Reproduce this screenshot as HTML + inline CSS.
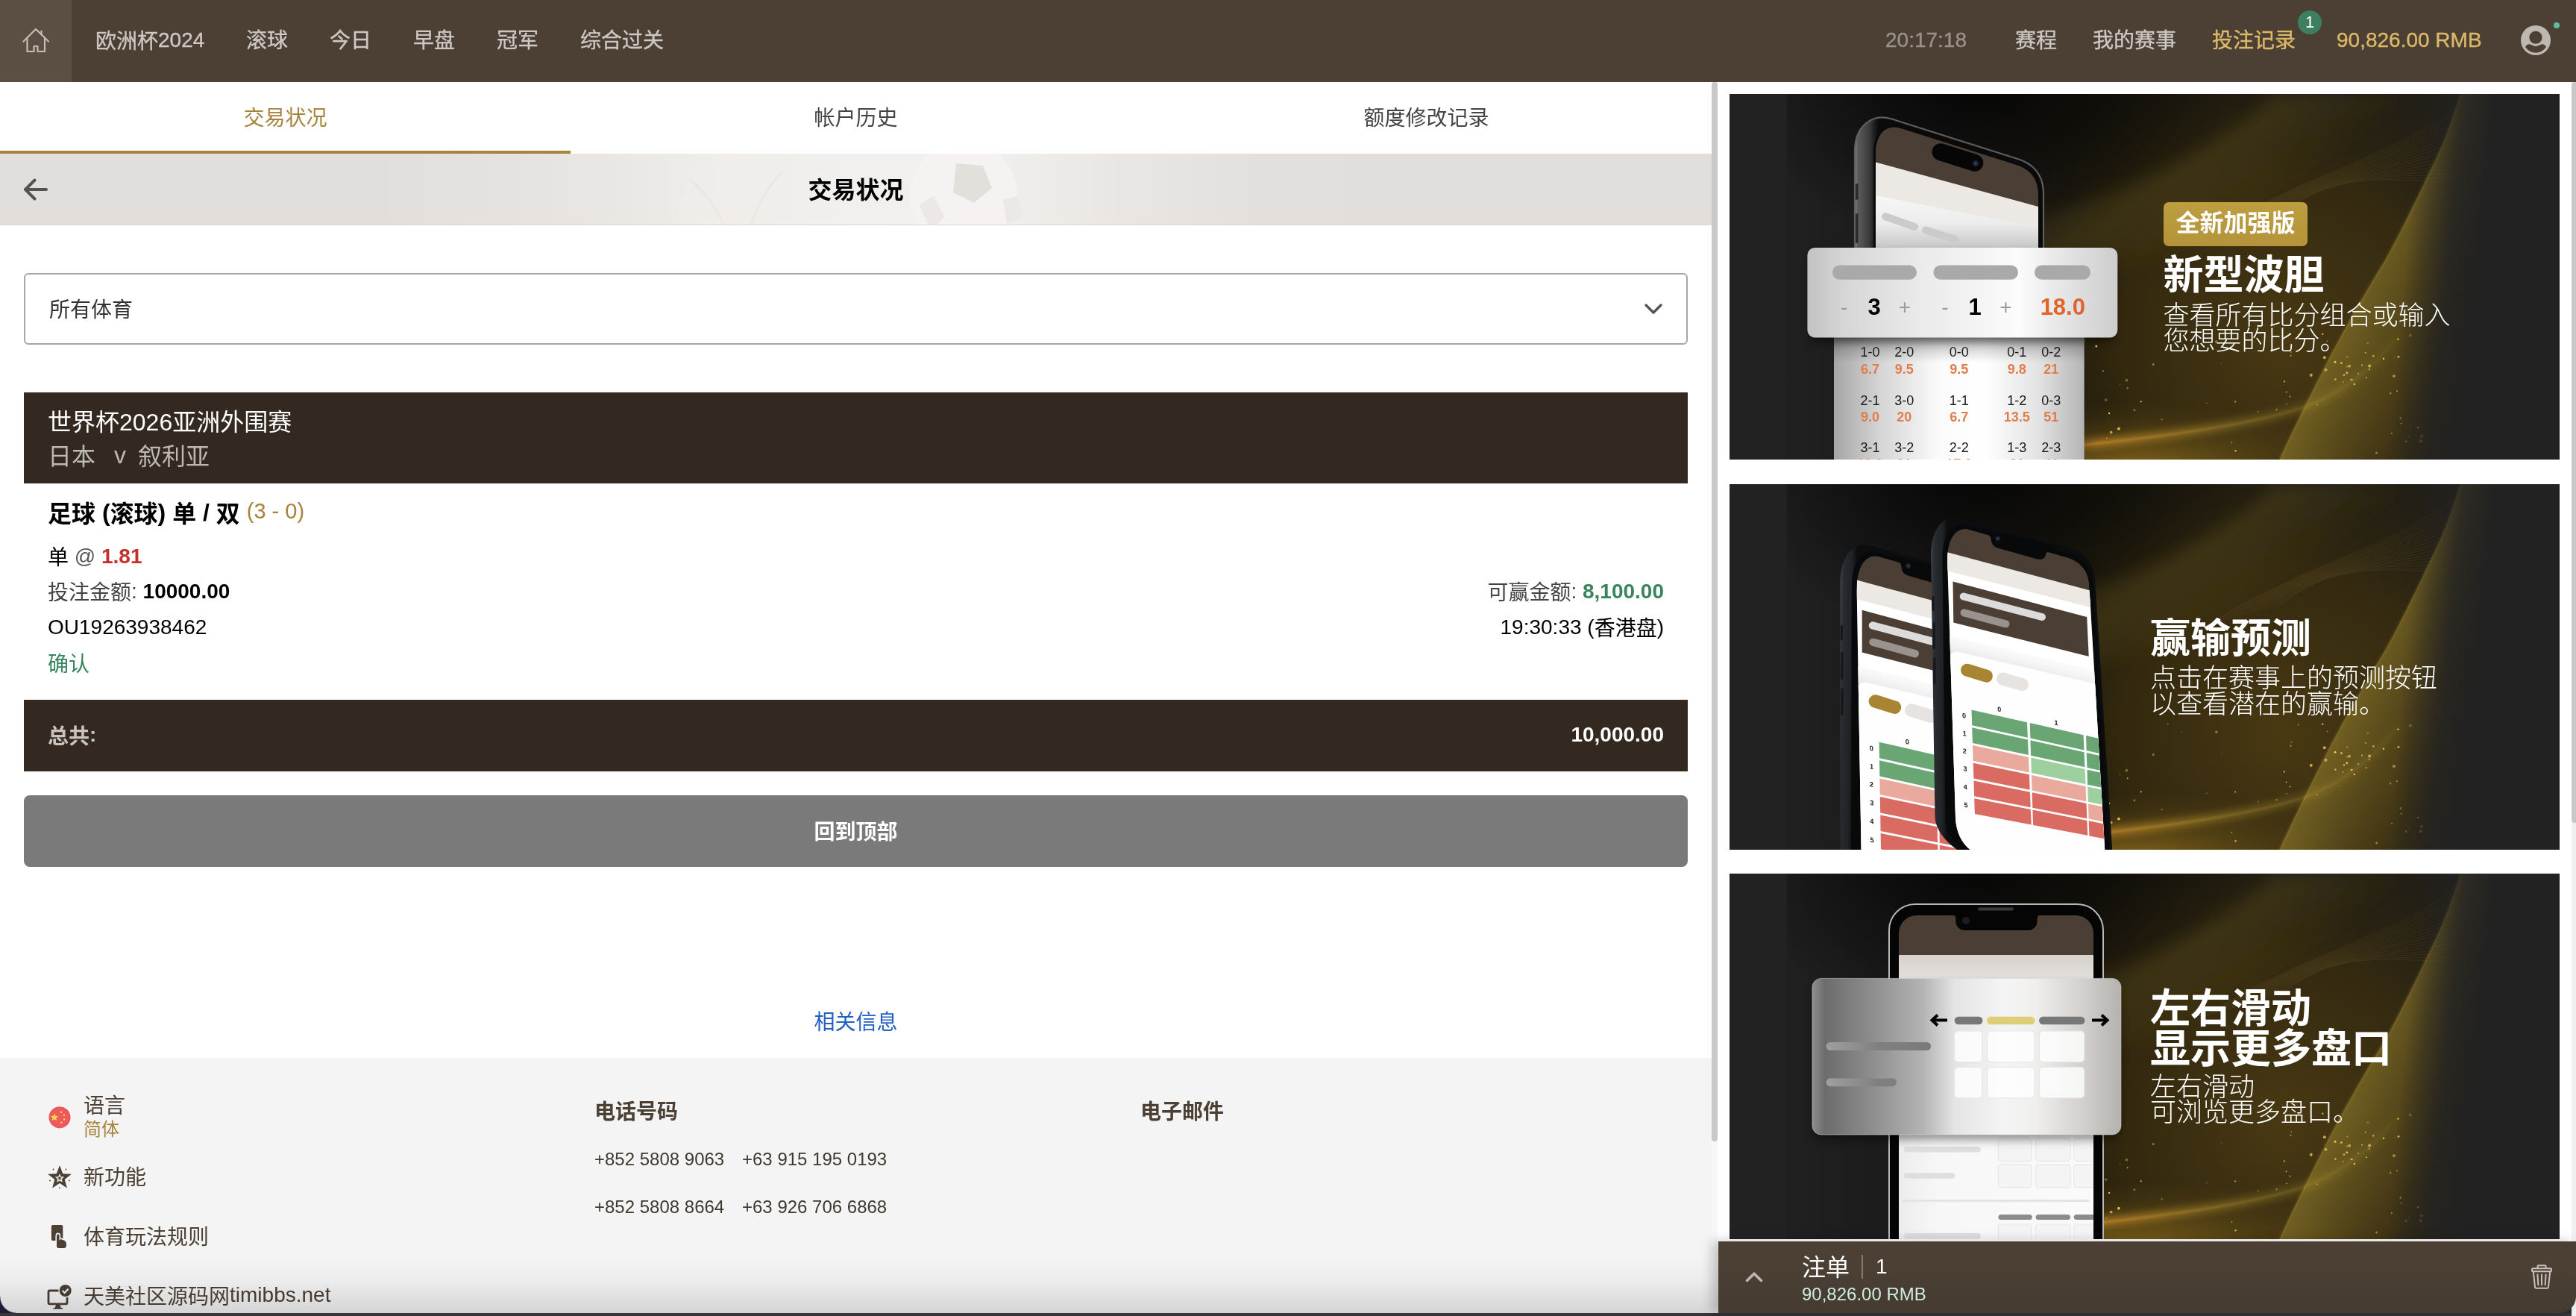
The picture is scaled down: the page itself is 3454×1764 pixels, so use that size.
<!DOCTYPE html>
<html lang="zh-CN">
<head>
<meta charset="utf-8">
<title>交易状况</title>
<style>
*{box-sizing:border-box;margin:0;padding:0}
html,body{width:3454px;height:1764px;overflow:hidden;background:#fff}
body{font-family:"Liberation Sans","Noto Sans CJK SC",sans-serif;font-size:28px;color:#000;position:relative;will-change:transform;transform:translateZ(0)}
@media (min-width:1700px) and (max-width:1800px){html{zoom:0.5}}
.abs{position:absolute}
.c{position:relative;top:2px}
/* NAV */
#nav{position:absolute;left:0;top:0;width:3454px;height:110px;background:#4c4035}
#home{position:absolute;left:0;top:0;width:96px;height:110px;background:#5b4f44}
#nav .it{position:absolute;top:0;height:110px;line-height:110px;font-size:28px;color:#cdc8c3;white-space:nowrap;-webkit-text-stroke:0.35px}
#nav .it.la{line-height:108px}
#nav .gold{color:#dcb968}
/* TABS */
#tabs{position:absolute;left:0;top:110px;width:2295px;height:96px;background:#fff}
#tabs .tab{position:absolute;top:0;width:765px;height:96px;line-height:98px;text-align:center;font-size:28px;color:#444}
#tabs .tab.on{color:#a5843c;border-bottom:4px solid #a5843c}
/* TITLE */
#title{position:absolute;left:0;top:206px;width:2295px;height:96px;overflow:hidden;background:linear-gradient(90deg,#e1dedb 0,#e1dedb 21%,#e6e3e0 32%,#efedea 42%,#f2f0ee 50%,#f1efed 58%,#e8e5e2 66%,#e2dfdc 74%,#e1dedb 100%);border-bottom:1px solid #d9d6d3}
#title .t{position:absolute;left:0;top:0;width:2295px;height:96px;line-height:98px;text-align:center;font-size:32px;font-weight:bold;color:#000}
/* main */
#sel{position:absolute;left:32px;top:366px;width:2231px;height:96px;border:2px solid #a6a6a6;border-radius:6px;background:#fff;font-size:28px;color:#333;line-height:96px;padding-left:32px}
#hdr{position:absolute;left:32px;top:526px;width:2231px;height:122px;background:#332921}
#hdr .l1{position:absolute;left:32px;top:18px;font-size:32px;line-height:44px;color:#fff;white-space:nowrap}
#hdr .l2{position:absolute;left:32px;top:64px;font-size:32px;line-height:44px;color:#bdb8b3;white-space:nowrap}
.ln{position:absolute;left:64px;height:48px;line-height:48px;font-size:28px;white-space:nowrap;color:#000}
.rn{position:absolute;right:1223px;height:48px;line-height:48px;font-size:28px;white-space:nowrap;color:#000;text-align:right}
#tot{position:absolute;left:32px;top:938px;width:2231px;height:96px;background:#332921;line-height:94px;font-weight:bold;font-size:28px}
#btn{position:absolute;left:32px;top:1066px;width:2231px;height:96px;background:#7a7a7a;border-radius:8px;line-height:100px;text-align:center;font-weight:bold;font-size:28px;color:#fff}
#rel{position:absolute;left:0;top:1347px;width:2295px;height:48px;line-height:48px;text-align:center;color:#2160c4;font-size:28px}
#foot{position:absolute;left:0;top:1418px;width:2295px;height:346px;background:#f4f4f4}
#foot .fi{position:absolute;left:112px;font-size:28px;color:#4c4035;white-space:nowrap;line-height:40px}
#foot .fh{position:absolute;font-size:28px;font-weight:bold;color:#4c4035;white-space:nowrap;line-height:40px}
#foot .ph{position:absolute;font-size:24px;color:#40372f;white-space:nowrap;line-height:40px}
/* scrollbars */
#sb1t{position:absolute;left:2295px;top:110px;width:8px;height:1654px;background:rgba(0,0,0,0.03)}
#sb1{position:absolute;left:2295px;top:110px;width:8px;height:1420px;background:#c8c8c8;border-radius:4px}
#sb2t{position:absolute;left:3448px;top:110px;width:6px;height:1654px;background:#f0f0f0}
#sb2{position:absolute;left:3448px;top:110px;width:8px;height:993px;background:#c8c8c8;border-radius:4px}
/* right */
.ban{position:absolute;left:2319px;width:1113px;height:490px;background:#222;overflow:hidden}
.bt1{position:absolute;color:#fff;font-weight:bold;font-size:54px;line-height:54.2px;white-space:nowrap;font-family:"Noto Sans CJK SC",sans-serif}
.bt2{position:absolute;color:#fff;font-weight:300;font-size:35px;line-height:34.4px;white-space:nowrap;font-family:"Noto Sans CJK SC",sans-serif}
#slip{position:absolute;left:2304px;top:1664px;width:1150px;height:96px;background:linear-gradient(180deg,#4c4035 0,#4c4035 40%,#443a30 100%);box-shadow:-8px 0 16px rgba(0,0,0,0.22);border-bottom-right-radius:22px}
#botg{position:absolute;left:0;top:1680px;width:2304px;height:80px;background:linear-gradient(180deg,rgba(0,0,0,0) 0,rgba(0,0,0,0.03) 45%,rgba(0,0,0,0.13) 100%)}
#bots{position:absolute;left:0;top:1760px;width:3454px;height:4px;background:#37343a}
</style>
</head>
<body>
<div id="nav">
  <div id="home"><svg class="abs" style="left:0;top:0" width="96" height="110" viewBox="0 0 96 110" fill="none" stroke="#c4bdb7" stroke-width="2.2" stroke-linecap="round" stroke-linejoin="round"><path d="M31.5 55.5 L48 39 L65 55.5"/><path d="M55.5 46 V41.5"/><path d="M36.5 51.5 V69 H45.5 V62 H50.5 V69 H60 V51.5"/></svg></div>
  <div class="it la" style="left:128px"><span class="c">欧洲杯</span>2024</div>
  <div class="it" style="left:330px">滚球</div>
  <div class="it" style="left:442px">今日</div>
  <div class="it" style="left:554px">早盘</div>
  <div class="it" style="left:666px">冠军</div>
  <div class="it" style="left:778px">综合过关</div>
  <div class="it la" style="left:2528px;color:#9a928b">20:17:18</div>
  <div class="it" style="left:2702px">赛程</div>
  <div class="it" style="left:2806px">我的赛事</div>
  <div class="it gold" style="left:2966px">投注记录</div>
  <div class="it gold la" style="left:3133px">90,826.00 RMB</div>
  <div class="abs" style="left:3081px;top:14px;width:32px;height:32px;border-radius:16px;background:#3d8060;color:#fff;font-size:22px;line-height:32px;text-align:center">1</div>
  <svg class="abs" style="left:3378px;top:32px" width="44" height="44" viewBox="0 0 44 44"><defs><clipPath id="avc"><circle cx="22" cy="22" r="17"/></clipPath></defs><circle cx="22" cy="22" r="20" fill="#bdb7b2"/><circle cx="22" cy="18.2" r="8.6" fill="#4c4035"/><g clip-path="url(#avc)"><path d="M8 31 C9.5 28.5 11 27.3 13 27.3 C16 27.3 18 30 22 30 C26 30 28 27.3 31 27.3 C33 27.3 34.5 28.5 36 31 A16.6 16.6 0 0 1 8 31 Z" fill="#4c4035"/></g></svg>
  <div class="abs" style="left:3424px;top:30px;width:8px;height:8px;border-radius:4px;background:#5cc0a0"></div>

</div>
<div id="tabs">
  <div class="tab on" style="left:0">交易状况</div>
  <div class="tab" style="left:765px">帐户历史</div>
  <div class="tab" style="left:1530px">额度修改记录</div>
</div>
<div id="title"><svg class="abs" style="left:0;top:0" width="2295" height="96" viewBox="0 206 2295 96"><g fill="none" stroke="#e9e6e3" stroke-width="3" opacity="0.8"><circle cx="992" cy="285" r="82" fill="#f3f1ee" fill-opacity="0.4" stroke="none"/><path d="M925 240 C960 270 985 320 990 370"/><path d="M1050 228 C1020 260 1000 300 998 360"/></g><circle cx="1292" cy="262" r="72" fill="#f6f4f2" fill-opacity="0.7"/><path d="M1282 219 L1318 222 L1330 252 L1306 272 L1278 258 Z" fill="#e3e0dc"/><path d="M1232 275 L1252 262 L1266 290 L1250 310 Z" fill="#ebe8e5"/><path d="M1345 268 L1365 262 L1372 290 L1350 300 Z" fill="#ebe8e5"/></svg><svg class="abs" style="left:24px;top:30px" width="48" height="36" viewBox="24 236 48 36" fill="none" stroke="#55524f" stroke-width="4" stroke-linecap="round" stroke-linejoin="round"><path d="M34.5 254 H62"/><path d="M46.5 241.5 L34 254 L46.5 266.5"/></svg><div class="t">交易状况</div></div>
<div id="sel">所有体育<svg class="abs" style="left:2164px;top:28px" width="36" height="30" viewBox="2198 396 36 30" fill="none" stroke="#555" stroke-width="3.4" stroke-linecap="round" stroke-linejoin="round"><path d="M2207 409 L2217 419 L2227 409"/></svg></div>
<div id="hdr"><div class="l1">世界杯2026亚洲外围赛</div><div class="l2">日本<span style="margin:0 16px 0 25px;position:relative;top:-2px">v</span>叙利亚</div></div>
<div class="ln" style="top:663px;font-size:32px;font-weight:bold"><span class="c">足球</span> (<span class="c">滚球</span>) <span class="c">单</span> / <span class="c">双</span> <span style="font-weight:normal;font-size:29px;color:#a5843c;position:relative;top:-3.5px">(3 - 0)</span></div>
<div class="ln" style="top:722px"><span class="c">单</span> <span style="color:#555">@</span> <b style="color:#c4302b">1.81</b></div>
<div class="ln" style="top:769px"><span style="color:#444"><span class="c">投注金额</span>:</span> <b>10000.00</b></div>
<div class="rn" style="top:769px"><span style="color:#444"><span class="c">可赢金额</span>:</span> <b style="color:#37845f">8,100.00</b></div>
<div class="ln" style="top:817px">OU19263938462</div>
<div class="rn" style="top:817px">19:30:33 (<span class="c">香港盘</span>)</div>
<div class="ln" style="top:867px;color:#37845f">确认</div>
<div id="tot"><span style="position:absolute;left:32px;color:#c9c4bf"><span class="c" style="top:3px">总共</span>:</span><span style="position:absolute;right:32px;color:#fff">10,000.00</span></div>
<div id="btn">回到顶部</div>
<div id="rel">相关信息</div>
<div id="foot">

  <svg class="abs" style="left:60px;top:60px" width="40" height="40" viewBox="60 1478 40 40"><circle cx="80" cy="1497.8" r="15.6" fill="#fff"/><circle cx="80" cy="1497.8" r="14.6" fill="#ec5a5e"/><g fill="#f6d84a"><path d="M73 1492.2 l1.45 3.6 3.85 0.25 -2.95 2.45 0.95 3.75 -3.3 -2.05 -3.3 2.05 0.95 -3.75 -2.95 -2.45 3.85 -0.25z"/><circle cx="82" cy="1490.8" r="1.3"/><circle cx="86" cy="1494.6" r="1.3"/><circle cx="86.2" cy="1500.6" r="1.3"/><circle cx="82.4" cy="1504.8" r="1.3"/></g></svg>
  <svg class="abs" style="left:60px;top:140px" width="40" height="40" viewBox="60 1558 40 40"><path d="M80 1562 l4.2 11.2 11.7 0.5 -9.2 7.4 3.2 11.4 -9.9 -6.5 -9.9 6.5 3.2 -11.4 -9.2 -7.4 11.7 -0.5z" fill="#4c4035"/><path d="M80 1573 l1.7 4.2 4.5 0.3 -3.5 2.9 1.1 4.4 -3.8 -2.4 -3.8 2.4 1.1 -4.4 -3.5 -2.9 4.5 -0.3z" fill="#f4f4f4"/><path d="M80 1576.3 l0.8 2 2.1 0.15 -1.6 1.35 0.5 2.05 -1.8 -1.1 -1.8 1.1 0.5 -2.05 -1.6 -1.35 2.1 -0.15z" fill="#4c4035"/><g fill="#4c4035"><circle cx="71.5" cy="1567.5" r="0.9"/><circle cx="88.5" cy="1567.5" r="0.9"/><circle cx="67" cy="1582.5" r="0.9"/><circle cx="93" cy="1582.5" r="0.9"/><circle cx="80" cy="1592.3" r="0.9"/></g></svg>
  <svg class="abs" style="left:60px;top:218px" width="40" height="44" viewBox="60 1636 40 44"><rect x="68.9" y="1641.9" width="15.4" height="21.2" rx="2" fill="#4c4035"/><path d="M75.2 1657 c0 -2.6 1.2 -3.6 2.6 -3.6 c1.5 0 2.6 1 2.6 3.2 v4.2 c0.5 -0.6 2.6 -0.8 3.2 0.3 c3 0.4 6 2.6 6.2 6.4 c0.1 3.2 -1 6.4 -3.4 6.4 h-8 c-1.6 0 -2.6 -1.2 -3.2 -2.6 z" fill="#4c4035" stroke="#f4f4f4" stroke-width="1.6"/></svg>
  <svg class="abs" style="left:60px;top:304px" width="40" height="36" viewBox="60 1722 40 36"><rect x="65" y="1730" width="25" height="17.8" rx="1.5" fill="none" stroke="#4c4035" stroke-width="2.8"/><path d="M75 1749 h5.6 l1.4 4.6 h-8.4 z M71.5 1753 h12.6 v1.8 h-12.6z" fill="#4c4035"/><circle cx="87.7" cy="1730" r="9.4" fill="#f4f4f4"/><circle cx="87.7" cy="1730" r="8" fill="#4c4035"/><path d="M83.8 1730 l2.8 2.9 5 -5.2" fill="none" stroke="#f4f4f4" stroke-width="2.2"/></svg>
  <div class="fi" style="top:45px">语言</div>
  <div class="fi" style="top:76px;color:#a5843c;font-size:24px">简体</div>
  <div class="fi" style="top:141px">新功能</div>
  <div class="fi" style="top:221px">体育玩法规则</div>
  <div class="fi" style="top:298px"><span class="c" style="top:3px">天美社区源码网</span>timibbs.net</div>
  <div class="fh" style="left:797px;top:53px">电话号码</div>
  <div class="fh" style="left:1529px;top:53px">电子邮件</div>
  <div class="ph" style="left:797px;top:116px">+852 5808 9063</div>
  <div class="ph" style="left:995px;top:116px">+63 915 195 0193</div>
  <div class="ph" style="left:797px;top:180px">+852 5808 8664</div>
  <div class="ph" style="left:995px;top:180px">+63 926 706 6868</div>
</div>
<div class="abs" style="left:3420px;top:1730px;width:34px;height:34px;background:#2c2b30"></div><div id="botg"></div><div class="abs" style="left:0;top:1738px;width:22px;height:22px;background:radial-gradient(circle at 100% 0,rgba(0,0,0,0) 21px,#241a38 22.5px)"></div><div id="bots"></div>
<div id="sb1t"></div><div id="sb1"></div>
<div id="sb2t"></div><div id="sb2"></div>
<div class="ban" id="b1" style="top:126px"><svg class="abs" style="left:0;top:0" width="1113" height="491" viewBox="0 0 1113 491">
<defs>
<linearGradient id="abase" x1="0" y1="0" x2="1" y2="0"><stop offset="0" stop-color="#202020"/><stop offset="0.22" stop-color="#191919"/><stop offset="0.45" stop-color="#1a170d"/><stop offset="1" stop-color="#22201a"/></linearGradient>
<radialGradient id="adark" cx="330" cy="-30" r="290" gradientUnits="userSpaceOnUse" gradientTransform="translate(330 -30) scale(1.2 0.8) translate(-330 30)"><stop offset="0" stop-color="#000" stop-opacity="0.8"/><stop offset="0.55" stop-color="#000" stop-opacity="0.35"/><stop offset="1" stop-color="#000" stop-opacity="0"/></radialGradient>
<radialGradient id="aglow" cx="740" cy="330" r="390" gradientUnits="userSpaceOnUse" gradientTransform="translate(740 330) scale(1 1.0) translate(-740 -330)"><stop offset="0" stop-color="#4e3d13" stop-opacity="0.9"/><stop offset="0.55" stop-color="#3e300f" stop-opacity="0.7"/><stop offset="1" stop-color="#2a200a" stop-opacity="0"/></radialGradient>
<radialGradient id="aglow2" cx="540" cy="500" r="210" gradientUnits="userSpaceOnUse" gradientTransform="translate(540 500) scale(1.5 0.42) translate(-540 -500)"><stop offset="0" stop-color="#a8801e" stop-opacity="0.7"/><stop offset="0.6" stop-color="#7a601a" stop-opacity="0.25"/><stop offset="1" stop-color="#5a4616" stop-opacity="0"/></radialGradient>
<linearGradient id="av1" x1="872" y1="228" x2="1000" y2="292" gradientUnits="userSpaceOnUse"><stop offset="0" stop-color="#8c782a" stop-opacity="0.62"/><stop offset="0.5" stop-color="#7a6826" stop-opacity="0.38"/><stop offset="1" stop-color="#6a5a22" stop-opacity="0.1"/></linearGradient>
<linearGradient id="av3" x1="520" y1="20" x2="640" y2="200" gradientUnits="userSpaceOnUse"><stop offset="0" stop-color="#6a5a20" stop-opacity="0.0"/><stop offset="0.55" stop-color="#6a5a20" stop-opacity="0.3"/><stop offset="1" stop-color="#6a5a20" stop-opacity="0.0"/></linearGradient>
<linearGradient id="afade" x1="905" y1="240" x2="1005" y2="250" gradientUnits="userSpaceOnUse"><stop offset="0" stop-color="#222" stop-opacity="0"/><stop offset="0.55" stop-color="#222" stop-opacity="0.8"/><stop offset="1" stop-color="#222" stop-opacity="1"/></linearGradient>
<linearGradient id="ast" x1="440" y1="470" x2="930" y2="330" gradientUnits="userSpaceOnUse"><stop offset="0" stop-color="#d08a28" stop-opacity="0.0"/><stop offset="0.1" stop-color="#e0982c" stop-opacity="0.85"/><stop offset="0.5" stop-color="#c8a83a" stop-opacity="0.45"/><stop offset="1" stop-color="#c8a83a" stop-opacity="0"/></linearGradient>
<filter id="ab6" x="-20%" y="-20%" width="140%" height="140%"><feGaussianBlur stdDeviation="6"/></filter>
<filter id="ab2" x="-20%" y="-20%" width="140%" height="140%"><feGaussianBlur stdDeviation="1.4"/></filter>
<filter id="ab10" x="-30%" y="-30%" width="160%" height="160%"><feGaussianBlur stdDeviation="10"/></filter>
<clipPath id="aclip"><rect x="77" y="0" width="959" height="491"/></clipPath>
</defs>
<rect width="1113" height="491" fill="#222"/>
<g clip-path="url(#aclip)">
<rect x="77" width="959" height="491" fill="url(#abase)"/>
<rect x="77" width="959" height="491" fill="url(#aglow)"/>
<rect x="77" width="959" height="491" fill="url(#aglow2)"/>
<rect x="77" width="959" height="491" fill="url(#adark)"/>
<path d="M380 175 C540 130 660 70 730 0 L900 0 C830 110 700 200 380 270 Z" fill="url(#av3)" filter="url(#ab10)"/>
<path d="M737 491 C765 430 785 392 804 354 C830 305 855 262 879 223 C900 185 918 148 935 112 C950 82 962 58 980 0 L1100 0 L1100 491 Z" fill="url(#av1)"/>
<path d="M420 476 C560 462 690 446 770 420 C830 398 870 360 900 320" fill="none" stroke="url(#ast)" stroke-width="8" filter="url(#ab6)"/>
<path d="M420 476 C560 462 690 446 770 420 C830 398 870 360 900 320" fill="none" stroke="url(#ast)" stroke-width="1.6" filter="url(#ab2)"/>
<path d="M737 491 C765 430 785 392 804 354 C830 305 855 262 879 223 C900 185 918 148 935 112 C950 82 962 58 980 0" fill="none" stroke="#c4a846" stroke-opacity="0.2" stroke-width="2.5" filter="url(#ab2)"/>

<g fill="none" stroke="#b09a48" stroke-width="0.7" opacity="0.16"><path d="M640 190 C760 110 880 90 975 18"/><path d="M646 188 C763 109 881 92 974 24"/><path d="M652 187 C766 109 881 93 974 30"/><path d="M658 185 C770 108 882 95 973 36"/><path d="M663 184 C773 107 883 96 972 41"/><path d="M669 182 C776 107 883 98 972 47"/><path d="M675 180 C780 106 884 100 971 53"/><path d="M681 179 C783 105 885 101 970 59"/><path d="M687 177 C786 105 885 103 970 65"/><path d="M693 175 C789 104 886 105 969 71"/><path d="M698 174 C792 104 886 106 968 76"/><path d="M704 172 C796 103 887 108 968 82"/><path d="M710 170 C799 102 888 110 967 88"/><path d="M716 169 C802 102 888 111 967 94"/><path d="M722 167 C806 101 889 113 966 100"/><path d="M728 166 C809 100 890 114 965 106"/><path d="M734 164 C812 100 890 116 965 112"/><path d="M739 162 C815 99 891 118 964 117"/></g>
<circle cx="678.1" cy="412.4" r="1.2" fill="#f0c75a" opacity="0.59"/><circle cx="863.3" cy="351.3" r="1.5" fill="#f0c75a" opacity="0.61"/><circle cx="752.4" cy="350.7" r="1.2" fill="#f0c75a" opacity="0.50"/><circle cx="511.7" cy="453.6" r="1.9" fill="#f0c75a" opacity="0.71"/><circle cx="743.9" cy="385.4" r="1.2" fill="#f0c75a" opacity="0.73"/><circle cx="753.2" cy="346.0" r="0.7" fill="#f0c75a" opacity="0.84"/><circle cx="499.1" cy="325.9" r="0.9" fill="#f0c75a" opacity="0.69"/><circle cx="827.9" cy="373.8" r="1.5" fill="#f0c75a" opacity="0.85"/><circle cx="708.8" cy="425.6" r="1.2" fill="#f0c75a" opacity="0.30"/><circle cx="509.1" cy="428.0" r="1.2" fill="#f0c75a" opacity="0.95"/><circle cx="928.0" cy="458.6" r="1.9" fill="#f0c75a" opacity="0.47"/><circle cx="818.7" cy="404.6" r="0.7" fill="#f0c75a" opacity="0.35"/><circle cx="822.5" cy="386.1" r="1.0" fill="#f0c75a" opacity="0.55"/><circle cx="910.7" cy="459.8" r="0.7" fill="#f0c75a" opacity="0.44"/><circle cx="896.4" cy="328.6" r="1.2" fill="#f0c75a" opacity="0.94"/><circle cx="652.8" cy="332.1" r="1.9" fill="#f0c75a" opacity="0.43"/><circle cx="780.5" cy="375.6" r="1.0" fill="#f0c75a" opacity="0.52"/><circle cx="913.5" cy="445.1" r="0.7" fill="#f0c75a" opacity="0.39"/><circle cx="795.2" cy="321.8" r="1.2" fill="#f0c75a" opacity="0.82"/><circle cx="551.7" cy="412.3" r="1.2" fill="#f0c75a" opacity="0.63"/><circle cx="923.2" cy="447.0" r="1.2" fill="#f0c75a" opacity="0.72"/><circle cx="523.6" cy="389.4" r="0.9" fill="#f0c75a" opacity="0.30"/><circle cx="867.6" cy="480.9" r="1.5" fill="#f0c75a" opacity="0.50"/><circle cx="877.0" cy="354.8" r="1.2" fill="#f0c75a" opacity="0.95"/><circle cx="746.9" cy="415.2" r="0.7" fill="#f0c75a" opacity="0.94"/><circle cx="568.1" cy="362.6" r="1.5" fill="#f0c75a" opacity="0.51"/><circle cx="606.3" cy="332.1" r="0.7" fill="#f0c75a" opacity="0.44"/><circle cx="762.8" cy="322.6" r="1.0" fill="#f0c75a" opacity="0.54"/><circle cx="678.5" cy="478.3" r="1.2" fill="#f0c75a" opacity="0.84"/><circle cx="532.4" cy="383.7" r="1.9" fill="#f0c75a" opacity="0.40"/><circle cx="887.9" cy="454.9" r="0.9" fill="#f0c75a" opacity="0.77"/><circle cx="542.9" cy="423.8" r="1.5" fill="#f0c75a" opacity="0.43"/><circle cx="907.1" cy="465.6" r="1.5" fill="#f0c75a" opacity="0.35"/><circle cx="491.8" cy="338.0" r="1.5" fill="#f0c75a" opacity="0.93"/><circle cx="579.7" cy="436.3" r="1.0" fill="#f0c75a" opacity="0.57"/><circle cx="886.2" cy="401.0" r="1.5" fill="#f0c75a" opacity="0.41"/><circle cx="801.4" cy="331.3" r="0.9" fill="#f0c75a" opacity="0.61"/><circle cx="770.6" cy="421.6" r="0.7" fill="#f0c75a" opacity="0.48"/><circle cx="892.0" cy="353.7" r="0.7" fill="#f0c75a" opacity="0.34"/><circle cx="659.3" cy="361.1" r="0.7" fill="#f0c75a" opacity="0.41"/><circle cx="639.6" cy="414.4" r="0.9" fill="#f0c75a" opacity="0.36"/><circle cx="533.7" cy="394.3" r="1.0" fill="#f0c75a" opacity="0.73"/><circle cx="788.0" cy="416.4" r="0.9" fill="#f0c75a" opacity="0.68"/><circle cx="894.9" cy="398.3" r="1.0" fill="#f0c75a" opacity="0.76"/><circle cx="912.9" cy="323.5" r="1.9" fill="#f0c75a" opacity="0.35"/><circle cx="500.9" cy="371.3" r="0.9" fill="#f0c75a" opacity="0.95"/><circle cx="504.6" cy="410.1" r="1.9" fill="#f0c75a" opacity="0.33"/><circle cx="900.7" cy="441.6" r="0.9" fill="#f0c75a" opacity="0.82"/><circle cx="890.9" cy="378.1" r="1.9" fill="#f0c75a" opacity="0.61"/><circle cx="505.7" cy="461.5" r="0.7" fill="#f0c75a" opacity="0.86"/><circle cx="733.5" cy="423.1" r="1.2" fill="#f0c75a" opacity="0.55"/><circle cx="475.7" cy="331.9" r="0.7" fill="#f0c75a" opacity="0.72"/><circle cx="926.9" cy="465.2" r="1.9" fill="#f0c75a" opacity="0.51"/><circle cx="899.8" cy="434.5" r="1.2" fill="#f0c75a" opacity="0.59"/><circle cx="855.7" cy="333.8" r="1.5" fill="#f0c75a" opacity="0.32"/><circle cx="746.6" cy="399.4" r="0.9" fill="#f0c75a" opacity="0.92"/><circle cx="521.9" cy="448.7" r="1.9" fill="#f0c75a" opacity="0.90"/><circle cx="587.7" cy="321.9" r="1.0" fill="#f0c75a" opacity="0.39"/><circle cx="751.4" cy="405.5" r="1.0" fill="#f0c75a" opacity="0.73"/><circle cx="673.3" cy="467.1" r="1.0" fill="#f0c75a" opacity="0.56"/><circle cx="837.9" cy="389.0" r="1.2" fill="#f0c75a" opacity="0.95"/><circle cx="812.3" cy="382.5" r="1.5" fill="#f0c75a" opacity="0.64"/><circle cx="854.0" cy="380.3" r="1.0" fill="#f0c75a" opacity="0.87"/><circle cx="857.9" cy="369.0" r="1.2" fill="#f0c75a" opacity="0.60"/><circle cx="779.7" cy="376.9" r="2.0" fill="#f0c75a" opacity="0.72"/><circle cx="799.5" cy="369.8" r="2.0" fill="#f0c75a" opacity="0.69"/><circle cx="848.0" cy="363.5" r="1.0" fill="#f0c75a" opacity="0.86"/><circle cx="833.3" cy="383.0" r="1.0" fill="#f0c75a" opacity="0.84"/><circle cx="824.0" cy="376.4" r="1.5" fill="#f0c75a" opacity="0.66"/><circle cx="843.1" cy="374.9" r="1.0" fill="#f0c75a" opacity="0.75"/><circle cx="812.0" cy="359.2" r="1.5" fill="#f0c75a" opacity="0.98"/><circle cx="831.1" cy="364.7" r="2.0" fill="#f0c75a" opacity="0.67"/><circle cx="828.3" cy="352.4" r="1.0" fill="#f0c75a" opacity="0.63"/><circle cx="834.6" cy="382.9" r="1.2" fill="#f0c75a" opacity="0.73"/><circle cx="852.7" cy="346.8" r="1.0" fill="#f0c75a" opacity="0.73"/><circle cx="858.1" cy="364.6" r="2.0" fill="#f0c75a" opacity="0.75"/><circle cx="797.8" cy="353.3" r="2.0" fill="#f0c75a" opacity="0.80"/><circle cx="820.4" cy="360.4" r="1.5" fill="#f0c75a" opacity="0.76"/><circle cx="827.8" cy="365.4" r="1.0" fill="#f0c75a" opacity="0.65"/><circle cx="897.0" cy="352.2" r="1.5" fill="#f0c75a" opacity="0.79"/><circle cx="403.1" cy="379.7" r="1.2" fill="#f0c75a" opacity="0.64"/><circle cx="261.5" cy="342.8" r="0.9" fill="#f0c75a" opacity="0.40"/><circle cx="284.9" cy="372.7" r="0.7" fill="#f0c75a" opacity="0.35"/><circle cx="427.6" cy="396.5" r="0.7" fill="#f0c75a" opacity="0.33"/><circle cx="257.2" cy="452.1" r="0.7" fill="#f0c75a" opacity="0.46"/><circle cx="469.9" cy="469.6" r="1.2" fill="#f0c75a" opacity="0.63"/><circle cx="370.6" cy="476.6" r="0.9" fill="#f0c75a" opacity="0.51"/><circle cx="370.5" cy="447.5" r="0.9" fill="#f0c75a" opacity="0.49"/><circle cx="242.9" cy="443.0" r="1.2" fill="#f0c75a" opacity="0.32"/><circle cx="314.5" cy="470.6" r="0.9" fill="#f0c75a" opacity="0.39"/><circle cx="272.0" cy="461.0" r="1.2" fill="#f0c75a" opacity="0.34"/><circle cx="422.2" cy="480.1" r="1.2" fill="#f0c75a" opacity="0.37"/>
<path d="M820 491 L930 0 L1040 0 L1040 491 Z" fill="url(#afade)"/>
</g>
</svg><svg class="abs" style="left:0;top:0" width="1113" height="491" viewBox="0 0 1113 491">
<defs>
<style>.tl{font:18px "Liberation Sans",sans-serif;fill:#1a1a1a;text-anchor:middle}.to{font:bold 18px "Liberation Sans",sans-serif;fill:#e07d4a;text-anchor:middle}.cn{font:bold 31px "Liberation Sans",sans-serif;fill:#000;text-anchor:middle}.cs{font:28px "Liberation Sans",sans-serif;fill:#9b9b9b;text-anchor:middle}</style>
<clipPath id="p1scr"><path d="M196 207 L196 80 C196 56 208 40 228 45.5 L380 93.6 C402 100 414 112 414 136 L414 207 Z"/></clipPath>
<linearGradient id="p1body" x1="168" y1="0" x2="200" y2="0" gradientUnits="userSpaceOnUse"><stop offset="0" stop-color="#8a8a8a"/><stop offset="0.12" stop-color="#5c5c5c"/><stop offset="0.6" stop-color="#3c3c3c"/><stop offset="0.8" stop-color="#202020"/><stop offset="1" stop-color="#0b0b0b"/></linearGradient>
<linearGradient id="p1card" x1="104" y1="0" x2="520" y2="0" gradientUnits="userSpaceOnUse"><stop offset="0" stop-color="#c2c2c2"/><stop offset="0.12" stop-color="#d6d6d6"/><stop offset="0.35" stop-color="#e9e9e9"/><stop offset="0.55" stop-color="#f4f4f4"/><stop offset="0.68" stop-color="#fcfcfc"/><stop offset="0.82" stop-color="#e6e6e6"/><stop offset="1" stop-color="#cdcdcd"/></linearGradient>
<linearGradient id="p1sheet" x1="140" y1="0" x2="476" y2="0" gradientUnits="userSpaceOnUse"><stop offset="0" stop-color="#a6a6a6"/><stop offset="0.18" stop-color="#d4d4d4"/><stop offset="0.42" stop-color="#fbfbfb"/><stop offset="0.6" stop-color="#ffffff"/><stop offset="0.82" stop-color="#e2e2e2"/><stop offset="1" stop-color="#b4b4b4"/></linearGradient>
<linearGradient id="p1shd" x1="0" y1="326" x2="0" y2="360" gradientUnits="userSpaceOnUse"><stop offset="0" stop-color="#000" stop-opacity="0.28"/><stop offset="1" stop-color="#000" stop-opacity="0"/></linearGradient>
<linearGradient id="p1wh" x1="0" y1="140" x2="0" y2="207" gradientUnits="userSpaceOnUse"><stop offset="0" stop-color="#f6f6f6"/><stop offset="0.5" stop-color="#ececec"/><stop offset="1" stop-color="#c6c6c6"/></linearGradient>
<filter id="p1sh" x="-10%" y="-20%" width="120%" height="150%"><feGaussianBlur stdDeviation="6"/></filter>
</defs>
<path d="M168 210 L168 76 C168 44 190 26 216 33 L384 86.3 C408 93 421 108 421 134 L421 210 Z" fill="url(#p1body)" stroke="#5e5e5e" stroke-width="2.2"/>
<path d="M193 210 L193 79 C193 53 207 37 228.5 42.5 L381 91 C404 97.5 417 110 417 136 L417 210 Z" fill="#0a0a0a"/>
<rect x="169" y="120" width="3.5" height="22" rx="1.7" fill="#2a2a2a"/><rect x="169" y="160" width="3.5" height="40" rx="1.7" fill="#2a2a2a"/>
<g clip-path="url(#p1scr)">
<rect x="190" y="30" width="230" height="180" fill="#4a3e35"/>
<path d="M196 91.4 L414 151 L414 180 L196 137 Z" fill="#ece8e4"/>
<path d="M196 136 L414 179 L414 210 L196 210 Z" fill="url(#p1wh)"/>
<path d="M209 164.2 L248 178" stroke="#cbcbcb" stroke-width="10" stroke-linecap="round"/>
<path d="M263 182.5 L303 195" stroke="#cbcbcb" stroke-width="10" stroke-linecap="round"/>
</g>
<path d="M283 77.7 L328.8 92.2" stroke="#060606" stroke-width="23" stroke-linecap="round"/>
<circle cx="330" cy="93" r="4.2" fill="#1c2238"/><circle cx="330" cy="93" r="1.6" fill="#3b4a78"/>
<!-- sheet -->
<rect x="140" y="320" width="335.6" height="180" fill="url(#p1sheet)"/>
<rect x="140" y="326" width="335.6" height="34" fill="url(#p1shd)"/>
<!-- card -->
<rect x="108" y="214" width="408" height="118" rx="10" fill="#000" opacity="0.5" filter="url(#p1sh)"/>
<rect x="104.4" y="206" width="415.9" height="120.4" rx="10" fill="url(#p1card)"/>
<rect x="138" y="229.4" width="113" height="19.4" rx="9.7" fill="#a9a9a9"/>
<rect x="273.4" y="229.4" width="113.6" height="19.4" rx="9.7" fill="#a9a9a9"/>
<rect x="409" y="229.4" width="75" height="19.4" rx="9.7" fill="#a9a9a9"/>
<text x="153.7" y="295" class="cs">-</text><text x="194" y="296.4" class="cn">3</text><text x="235" y="295" class="cs">+</text>
<text x="289" y="295" class="cs">-</text><text x="329" y="296.4" class="cn">1</text><text x="370.4" y="295" class="cs">+</text>
<text x="446.8" y="296.4" class="cn" style="fill:#e2642c">18.0</text>
<text x="188.4" y="352.3" class="tl">1-0</text><text x="188.4" y="374.8" class="to">6.7</text><text x="234.2" y="352.3" class="tl">2-0</text><text x="234.2" y="374.8" class="to">9.5</text><text x="307.7" y="352.3" class="tl">0-0</text><text x="307.7" y="374.8" class="to">9.5</text><text x="385.3" y="352.3" class="tl">0-1</text><text x="385.3" y="374.8" class="to">9.8</text><text x="431.2" y="352.3" class="tl">0-2</text><text x="431.2" y="374.8" class="to">21</text><text x="188.4" y="416.6" class="tl">2-1</text><text x="188.4" y="439.0" class="to">9.0</text><text x="234.2" y="416.6" class="tl">3-0</text><text x="234.2" y="439.0" class="to">20</text><text x="307.7" y="416.6" class="tl">1-1</text><text x="307.7" y="439.0" class="to">6.7</text><text x="385.3" y="416.6" class="tl">1-2</text><text x="385.3" y="439.0" class="to">13.5</text><text x="431.2" y="416.6" class="tl">0-3</text><text x="431.2" y="439.0" class="to">51</text><text x="188.4" y="480.0" class="tl">3-1</text><text x="188.4" y="502.3" class="to">13.0</text><text x="234.2" y="480.0" class="tl">3-2</text><text x="234.2" y="502.3" class="to">31</text><text x="307.7" y="480.0" class="tl">2-2</text><text x="307.7" y="502.3" class="to">17.0</text><text x="385.3" y="480.0" class="tl">1-3</text><text x="385.3" y="502.3" class="to">26</text><text x="431.2" y="480.0" class="tl">2-3</text><text x="431.2" y="502.3" class="to">46</text>
</svg>
<div class="abs" style="left:582px;top:144.5px;width:193px;height:59px;border-radius:7px;background:linear-gradient(180deg,#bd9e40,#b4933a);color:#fff;font:bold 32px/51px 'Noto Sans CJK SC',sans-serif;text-align:center;white-space:nowrap">全新加强版</div>
<div class="bt1" style="left:581.5px;top:211.6px">新型波胆</div>
<div class="bt2" style="left:581.5px;top:276.5px">查看所有比分组合或输入<br>您想要的比分。</div></div>
<div class="ban" id="b2" style="top:649px"><svg class="abs" style="left:0;top:0" width="1113" height="491" viewBox="0 0 1113 491">
<defs>
<linearGradient id="bbase" x1="0" y1="0" x2="1" y2="0"><stop offset="0" stop-color="#202020"/><stop offset="0.22" stop-color="#191919"/><stop offset="0.45" stop-color="#1a170d"/><stop offset="1" stop-color="#22201a"/></linearGradient>
<radialGradient id="bdark" cx="330" cy="-30" r="290" gradientUnits="userSpaceOnUse" gradientTransform="translate(330 -30) scale(1.2 0.8) translate(-330 30)"><stop offset="0" stop-color="#000" stop-opacity="0.8"/><stop offset="0.55" stop-color="#000" stop-opacity="0.35"/><stop offset="1" stop-color="#000" stop-opacity="0"/></radialGradient>
<radialGradient id="bglow" cx="740" cy="330" r="390" gradientUnits="userSpaceOnUse" gradientTransform="translate(740 330) scale(1 1.0) translate(-740 -330)"><stop offset="0" stop-color="#4e3d13" stop-opacity="0.9"/><stop offset="0.55" stop-color="#3e300f" stop-opacity="0.7"/><stop offset="1" stop-color="#2a200a" stop-opacity="0"/></radialGradient>
<radialGradient id="bglow2" cx="540" cy="500" r="210" gradientUnits="userSpaceOnUse" gradientTransform="translate(540 500) scale(1.5 0.42) translate(-540 -500)"><stop offset="0" stop-color="#a8801e" stop-opacity="0.7"/><stop offset="0.6" stop-color="#7a601a" stop-opacity="0.25"/><stop offset="1" stop-color="#5a4616" stop-opacity="0"/></radialGradient>
<linearGradient id="bv1" x1="872" y1="228" x2="1000" y2="292" gradientUnits="userSpaceOnUse"><stop offset="0" stop-color="#8c782a" stop-opacity="0.62"/><stop offset="0.5" stop-color="#7a6826" stop-opacity="0.38"/><stop offset="1" stop-color="#6a5a22" stop-opacity="0.1"/></linearGradient>
<linearGradient id="bv3" x1="520" y1="20" x2="640" y2="200" gradientUnits="userSpaceOnUse"><stop offset="0" stop-color="#6a5a20" stop-opacity="0.0"/><stop offset="0.55" stop-color="#6a5a20" stop-opacity="0.3"/><stop offset="1" stop-color="#6a5a20" stop-opacity="0.0"/></linearGradient>
<linearGradient id="bfade" x1="905" y1="240" x2="1005" y2="250" gradientUnits="userSpaceOnUse"><stop offset="0" stop-color="#222" stop-opacity="0"/><stop offset="0.55" stop-color="#222" stop-opacity="0.8"/><stop offset="1" stop-color="#222" stop-opacity="1"/></linearGradient>
<linearGradient id="bst" x1="440" y1="470" x2="930" y2="330" gradientUnits="userSpaceOnUse"><stop offset="0" stop-color="#d08a28" stop-opacity="0.0"/><stop offset="0.1" stop-color="#e0982c" stop-opacity="0.85"/><stop offset="0.5" stop-color="#c8a83a" stop-opacity="0.45"/><stop offset="1" stop-color="#c8a83a" stop-opacity="0"/></linearGradient>
<filter id="bb6" x="-20%" y="-20%" width="140%" height="140%"><feGaussianBlur stdDeviation="6"/></filter>
<filter id="bb2" x="-20%" y="-20%" width="140%" height="140%"><feGaussianBlur stdDeviation="1.4"/></filter>
<filter id="bb10" x="-30%" y="-30%" width="160%" height="160%"><feGaussianBlur stdDeviation="10"/></filter>
<clipPath id="bclip"><rect x="77" y="0" width="959" height="491"/></clipPath>
</defs>
<rect width="1113" height="491" fill="#222"/>
<g clip-path="url(#bclip)">
<rect x="77" width="959" height="491" fill="url(#bbase)"/>
<rect x="77" width="959" height="491" fill="url(#bglow)"/>
<rect x="77" width="959" height="491" fill="url(#bglow2)"/>
<rect x="77" width="959" height="491" fill="url(#bdark)"/>
<path d="M380 175 C540 130 660 70 730 0 L900 0 C830 110 700 200 380 270 Z" fill="url(#bv3)" filter="url(#bb10)"/>
<path d="M737 491 C765 430 785 392 804 354 C830 305 855 262 879 223 C900 185 918 148 935 112 C950 82 962 58 980 0 L1100 0 L1100 491 Z" fill="url(#bv1)"/>
<path d="M420 476 C560 462 690 446 770 420 C830 398 870 360 900 320" fill="none" stroke="url(#bst)" stroke-width="8" filter="url(#bb6)"/>
<path d="M420 476 C560 462 690 446 770 420 C830 398 870 360 900 320" fill="none" stroke="url(#bst)" stroke-width="1.6" filter="url(#bb2)"/>
<path d="M737 491 C765 430 785 392 804 354 C830 305 855 262 879 223 C900 185 918 148 935 112 C950 82 962 58 980 0" fill="none" stroke="#c4a846" stroke-opacity="0.2" stroke-width="2.5" filter="url(#bb2)"/>

<g fill="none" stroke="#b09a48" stroke-width="0.7" opacity="0.16"><path d="M640 190 C760 110 880 90 975 18"/><path d="M646 188 C763 109 881 92 974 24"/><path d="M652 187 C766 109 881 93 974 30"/><path d="M658 185 C770 108 882 95 973 36"/><path d="M663 184 C773 107 883 96 972 41"/><path d="M669 182 C776 107 883 98 972 47"/><path d="M675 180 C780 106 884 100 971 53"/><path d="M681 179 C783 105 885 101 970 59"/><path d="M687 177 C786 105 885 103 970 65"/><path d="M693 175 C789 104 886 105 969 71"/><path d="M698 174 C792 104 886 106 968 76"/><path d="M704 172 C796 103 887 108 968 82"/><path d="M710 170 C799 102 888 110 967 88"/><path d="M716 169 C802 102 888 111 967 94"/><path d="M722 167 C806 101 889 113 966 100"/><path d="M728 166 C809 100 890 114 965 106"/><path d="M734 164 C812 100 890 116 965 112"/><path d="M739 162 C815 99 891 118 964 117"/></g>
<circle cx="678.1" cy="412.4" r="1.2" fill="#f0c75a" opacity="0.59"/><circle cx="863.3" cy="351.3" r="1.5" fill="#f0c75a" opacity="0.61"/><circle cx="752.4" cy="350.7" r="1.2" fill="#f0c75a" opacity="0.50"/><circle cx="511.7" cy="453.6" r="1.9" fill="#f0c75a" opacity="0.71"/><circle cx="743.9" cy="385.4" r="1.2" fill="#f0c75a" opacity="0.73"/><circle cx="753.2" cy="346.0" r="0.7" fill="#f0c75a" opacity="0.84"/><circle cx="499.1" cy="325.9" r="0.9" fill="#f0c75a" opacity="0.69"/><circle cx="827.9" cy="373.8" r="1.5" fill="#f0c75a" opacity="0.85"/><circle cx="708.8" cy="425.6" r="1.2" fill="#f0c75a" opacity="0.30"/><circle cx="509.1" cy="428.0" r="1.2" fill="#f0c75a" opacity="0.95"/><circle cx="928.0" cy="458.6" r="1.9" fill="#f0c75a" opacity="0.47"/><circle cx="818.7" cy="404.6" r="0.7" fill="#f0c75a" opacity="0.35"/><circle cx="822.5" cy="386.1" r="1.0" fill="#f0c75a" opacity="0.55"/><circle cx="910.7" cy="459.8" r="0.7" fill="#f0c75a" opacity="0.44"/><circle cx="896.4" cy="328.6" r="1.2" fill="#f0c75a" opacity="0.94"/><circle cx="652.8" cy="332.1" r="1.9" fill="#f0c75a" opacity="0.43"/><circle cx="780.5" cy="375.6" r="1.0" fill="#f0c75a" opacity="0.52"/><circle cx="913.5" cy="445.1" r="0.7" fill="#f0c75a" opacity="0.39"/><circle cx="795.2" cy="321.8" r="1.2" fill="#f0c75a" opacity="0.82"/><circle cx="551.7" cy="412.3" r="1.2" fill="#f0c75a" opacity="0.63"/><circle cx="923.2" cy="447.0" r="1.2" fill="#f0c75a" opacity="0.72"/><circle cx="523.6" cy="389.4" r="0.9" fill="#f0c75a" opacity="0.30"/><circle cx="867.6" cy="480.9" r="1.5" fill="#f0c75a" opacity="0.50"/><circle cx="877.0" cy="354.8" r="1.2" fill="#f0c75a" opacity="0.95"/><circle cx="746.9" cy="415.2" r="0.7" fill="#f0c75a" opacity="0.94"/><circle cx="568.1" cy="362.6" r="1.5" fill="#f0c75a" opacity="0.51"/><circle cx="606.3" cy="332.1" r="0.7" fill="#f0c75a" opacity="0.44"/><circle cx="762.8" cy="322.6" r="1.0" fill="#f0c75a" opacity="0.54"/><circle cx="678.5" cy="478.3" r="1.2" fill="#f0c75a" opacity="0.84"/><circle cx="532.4" cy="383.7" r="1.9" fill="#f0c75a" opacity="0.40"/><circle cx="887.9" cy="454.9" r="0.9" fill="#f0c75a" opacity="0.77"/><circle cx="542.9" cy="423.8" r="1.5" fill="#f0c75a" opacity="0.43"/><circle cx="907.1" cy="465.6" r="1.5" fill="#f0c75a" opacity="0.35"/><circle cx="491.8" cy="338.0" r="1.5" fill="#f0c75a" opacity="0.93"/><circle cx="579.7" cy="436.3" r="1.0" fill="#f0c75a" opacity="0.57"/><circle cx="886.2" cy="401.0" r="1.5" fill="#f0c75a" opacity="0.41"/><circle cx="801.4" cy="331.3" r="0.9" fill="#f0c75a" opacity="0.61"/><circle cx="770.6" cy="421.6" r="0.7" fill="#f0c75a" opacity="0.48"/><circle cx="892.0" cy="353.7" r="0.7" fill="#f0c75a" opacity="0.34"/><circle cx="659.3" cy="361.1" r="0.7" fill="#f0c75a" opacity="0.41"/><circle cx="639.6" cy="414.4" r="0.9" fill="#f0c75a" opacity="0.36"/><circle cx="533.7" cy="394.3" r="1.0" fill="#f0c75a" opacity="0.73"/><circle cx="788.0" cy="416.4" r="0.9" fill="#f0c75a" opacity="0.68"/><circle cx="894.9" cy="398.3" r="1.0" fill="#f0c75a" opacity="0.76"/><circle cx="912.9" cy="323.5" r="1.9" fill="#f0c75a" opacity="0.35"/><circle cx="500.9" cy="371.3" r="0.9" fill="#f0c75a" opacity="0.95"/><circle cx="504.6" cy="410.1" r="1.9" fill="#f0c75a" opacity="0.33"/><circle cx="900.7" cy="441.6" r="0.9" fill="#f0c75a" opacity="0.82"/><circle cx="890.9" cy="378.1" r="1.9" fill="#f0c75a" opacity="0.61"/><circle cx="505.7" cy="461.5" r="0.7" fill="#f0c75a" opacity="0.86"/><circle cx="733.5" cy="423.1" r="1.2" fill="#f0c75a" opacity="0.55"/><circle cx="475.7" cy="331.9" r="0.7" fill="#f0c75a" opacity="0.72"/><circle cx="926.9" cy="465.2" r="1.9" fill="#f0c75a" opacity="0.51"/><circle cx="899.8" cy="434.5" r="1.2" fill="#f0c75a" opacity="0.59"/><circle cx="855.7" cy="333.8" r="1.5" fill="#f0c75a" opacity="0.32"/><circle cx="746.6" cy="399.4" r="0.9" fill="#f0c75a" opacity="0.92"/><circle cx="521.9" cy="448.7" r="1.9" fill="#f0c75a" opacity="0.90"/><circle cx="587.7" cy="321.9" r="1.0" fill="#f0c75a" opacity="0.39"/><circle cx="751.4" cy="405.5" r="1.0" fill="#f0c75a" opacity="0.73"/><circle cx="673.3" cy="467.1" r="1.0" fill="#f0c75a" opacity="0.56"/><circle cx="837.9" cy="389.0" r="1.2" fill="#f0c75a" opacity="0.95"/><circle cx="812.3" cy="382.5" r="1.5" fill="#f0c75a" opacity="0.64"/><circle cx="854.0" cy="380.3" r="1.0" fill="#f0c75a" opacity="0.87"/><circle cx="857.9" cy="369.0" r="1.2" fill="#f0c75a" opacity="0.60"/><circle cx="779.7" cy="376.9" r="2.0" fill="#f0c75a" opacity="0.72"/><circle cx="799.5" cy="369.8" r="2.0" fill="#f0c75a" opacity="0.69"/><circle cx="848.0" cy="363.5" r="1.0" fill="#f0c75a" opacity="0.86"/><circle cx="833.3" cy="383.0" r="1.0" fill="#f0c75a" opacity="0.84"/><circle cx="824.0" cy="376.4" r="1.5" fill="#f0c75a" opacity="0.66"/><circle cx="843.1" cy="374.9" r="1.0" fill="#f0c75a" opacity="0.75"/><circle cx="812.0" cy="359.2" r="1.5" fill="#f0c75a" opacity="0.98"/><circle cx="831.1" cy="364.7" r="2.0" fill="#f0c75a" opacity="0.67"/><circle cx="828.3" cy="352.4" r="1.0" fill="#f0c75a" opacity="0.63"/><circle cx="834.6" cy="382.9" r="1.2" fill="#f0c75a" opacity="0.73"/><circle cx="852.7" cy="346.8" r="1.0" fill="#f0c75a" opacity="0.73"/><circle cx="858.1" cy="364.6" r="2.0" fill="#f0c75a" opacity="0.75"/><circle cx="797.8" cy="353.3" r="2.0" fill="#f0c75a" opacity="0.80"/><circle cx="820.4" cy="360.4" r="1.5" fill="#f0c75a" opacity="0.76"/><circle cx="827.8" cy="365.4" r="1.0" fill="#f0c75a" opacity="0.65"/><circle cx="897.0" cy="352.2" r="1.5" fill="#f0c75a" opacity="0.79"/><circle cx="403.1" cy="379.7" r="1.2" fill="#f0c75a" opacity="0.64"/><circle cx="261.5" cy="342.8" r="0.9" fill="#f0c75a" opacity="0.40"/><circle cx="284.9" cy="372.7" r="0.7" fill="#f0c75a" opacity="0.35"/><circle cx="427.6" cy="396.5" r="0.7" fill="#f0c75a" opacity="0.33"/><circle cx="257.2" cy="452.1" r="0.7" fill="#f0c75a" opacity="0.46"/><circle cx="469.9" cy="469.6" r="1.2" fill="#f0c75a" opacity="0.63"/><circle cx="370.6" cy="476.6" r="0.9" fill="#f0c75a" opacity="0.51"/><circle cx="370.5" cy="447.5" r="0.9" fill="#f0c75a" opacity="0.49"/><circle cx="242.9" cy="443.0" r="1.2" fill="#f0c75a" opacity="0.32"/><circle cx="314.5" cy="470.6" r="0.9" fill="#f0c75a" opacity="0.39"/><circle cx="272.0" cy="461.0" r="1.2" fill="#f0c75a" opacity="0.34"/><circle cx="422.2" cy="480.1" r="1.2" fill="#f0c75a" opacity="0.37"/>
<path d="M820 491 L930 0 L1040 0 L1040 491 Z" fill="url(#bfade)"/>
</g>
</svg><svg class="abs" style="left:0;top:0" width="1113" height="491" viewBox="0 0 1113 491">
<defs>
<style>.pl{font:bold 9px "Liberation Sans",sans-serif;fill:#222;text-anchor:middle}</style>
<clipPath id="qscr"><path d="M292 100 C292 76 302 57 320 60.4 L452 98 C470 103 482 116 482.5 138 L503.5 495 L330 495 C314 486 304 470 303 447 Z"/></clipPath>
<linearGradient id="qside" x1="270" y1="0" x2="292" y2="0" gradientUnits="userSpaceOnUse"><stop offset="0" stop-color="#3a3f44"/><stop offset="0.25" stop-color="#272b2f"/><stop offset="0.7" stop-color="#1f2326"/><stop offset="1" stop-color="#0c0d0e"/></linearGradient>
<linearGradient id="qgr" x1="300" y1="194" x2="291.5" y2="228" gradientUnits="userSpaceOnUse"><stop offset="0" stop-color="#fff"/><stop offset="0.5" stop-color="#f6f6f7"/><stop offset="1" stop-color="#e6e6ea"/></linearGradient>
</defs>
<g transform="matrix(1.015 0 -0.0145 1.029 -124.4 34.5)">
<path d="M270 95 C270 62 285 40 310 46.5 L458 86.5 C478 92 490 108 490.5 135 L513.5 495 L312 495 C290 480 277 465 275.5 447 Z" fill="url(#qside)"/>
<path d="M285.5 98 C285.5 70 297 51 318 55.5 L455 93 C473 98 486.5 112 487 137 L509.5 495 L320 495 C300 482 290.5 468 289.5 447 Z" fill="#08090a"/>
<rect x="271.5" y="150" width="3" height="20" rx="1.5" fill="#15181b"/><rect x="272.5" y="185" width="3.2" height="36" rx="1.6" fill="#15181b"/><rect x="273.2" y="232" width="3.2" height="36" rx="1.6" fill="#15181b"/>
<g clip-path="url(#qscr)">
<path d="M292 100 C292 76 302 57 320 60.4 L452 98 C470 103 482 116 482.5 138 L503.5 495 L330 495 C314 486 304 470 303 447 Z" fill="#4a3e35"/>
<path d="M280 100.0 L500 158.0 L520 500 L280 500 Z" fill="#ffffff"/>
<path d="M280 88.1 L500 146.8 L500 169.0 L280 113.1 Z" fill="#ece8e4"/>
<path d="M280 200 L500 252 L500 300 L280 236 Z" fill="url(#qgr)"/>
<path d="M293 236 C294 228 300 223.5 308 225 L500 270 L520 500 L300 500 Z" fill="#fefefe"/>
<path d="M299.5 130.5 L479.2 178.1 L481.7 230.8 L300.3 185.6 Z" fill="#4a3e35"/>
<path d="M313.7 150.5 L419 178" stroke="#dcdcdc" stroke-width="10" stroke-linecap="round"/>
<path d="M314.5 172.3 L370.5 187.3" stroke="#9a928c" stroke-width="10" stroke-linecap="round"/>
<path d="M318.5 249.2 L344.5 257.2" stroke="#a88532" stroke-width="17" stroke-linecap="round"/>
<path d="M366.5 261 L392.5 268.7" stroke="#e6e3e0" stroke-width="17" stroke-linecap="round"/>
<path d="M324.5 302.4 L399.0 319.2 L399.8 339.7 L325.2 323.3 Z" fill="#6aa674" /><path d="M325.2 326.2 L400.0 342.6 L400.8 363.1 L325.9 347.0 Z" fill="#6aa674" /><path d="M326.0 349.9 L400.9 365.9 L401.8 386.5 L326.6 370.8 Z" fill="#e9a99c" /><path d="M326.7 373.7 L401.9 389.3 L402.7 409.8 L327.4 394.5 Z" fill="#d96b62" /><path d="M327.5 397.4 L402.9 412.7 L403.7 433.2 L328.1 418.3 Z" fill="#d96b62" /><path d="M328.2 421.2 L403.8 436.0 L404.7 456.5 L328.9 442.0 Z" fill="#d96b62" /><path d="M402.7 320.0 L474.6 336.2 L475.4 356.4 L403.4 340.5 Z" fill="#6aa674" /><path d="M403.4 343.3 L475.6 359.2 L476.4 379.3 L404.1 363.8 Z" fill="#6aa674" /><path d="M404.2 366.6 L476.5 382.1 L477.4 402.2 L404.8 387.1 Z" fill="#9dcf9f" /><path d="M404.9 389.9 L477.5 405.0 L478.3 425.2 L405.6 410.4 Z" fill="#e9a99c" /><path d="M405.7 413.2 L478.5 427.9 L479.3 448.1 L406.3 433.7 Z" fill="#d96b62" /><path d="M406.4 436.5 L479.4 450.9 L480.3 471.0 L407.1 457.0 Z" fill="#d96b62" /><path d="M478.0 337.0 L520.0 346.5 L520.8 366.4 L478.7 357.1 Z" fill="#6aa674" /><path d="M478.7 359.9 L521.0 369.1 L521.8 389.1 L479.4 380.0 Z" fill="#6aa674" /><path d="M479.5 382.7 L521.9 391.8 L522.8 411.7 L480.1 402.8 Z" fill="#6aa674" /><path d="M480.2 405.6 L522.9 414.5 L523.7 434.4 L480.9 425.7 Z" fill="#9dcf9f" /><path d="M481.0 428.5 L523.9 437.1 L524.7 457.0 L481.6 448.5 Z" fill="#e9a99c" /><path d="M481.7 451.3 L524.8 459.8 L525.7 479.7 L482.4 471.4 Z" fill="#d96b62" />
<text transform="matrix(1 0.23 0 1 314.4 313.4)" class="pl">0</text><text transform="matrix(1 0.23 0 1 315.2 337.2)" class="pl">1</text><text transform="matrix(1 0.23 0 1 315.2 360.7)" class="pl">2</text><text transform="matrix(1 0.23 0 1 315.9 384.6)" class="pl">3</text><text transform="matrix(1 0.23 0 1 316.3 408.8)" class="pl">4</text><text transform="matrix(1 0.23 0 1 317.0 433.0)" class="pl">5</text><text transform="matrix(1 0.24 0 1 361.7 304.9)" class="pl">0</text><text transform="matrix(1 0.24 0 1 438 322.8)" class="pl">1</text>
</g>
<path d="M340 60 L343.5 66 C350 68 350.5 72 351 76 C352 82 356 84.5 361 86 L410 99.8 C418 102 423 100.5 424 94.5 C424.6 91 426 89 433 91.5 L436 82 Z" fill="#08090a"/>
<circle cx="359.7" cy="72.8" r="3.6" fill="#1a1d2b"/><circle cx="359.7" cy="72.8" r="1.4" fill="#3a4468"/>
</g>

<path d="M270 95 C270 62 285 40 310 46.5 L458 86.5 C478 92 490 108 490.5 135 L513.5 495 L312 495 C290 480 277 465 275.5 447 Z" fill="url(#qside)"/>
<path d="M285.5 98 C285.5 70 297 51 318 55.5 L455 93 C473 98 486.5 112 487 137 L509.5 495 L320 495 C300 482 290.5 468 289.5 447 Z" fill="#08090a"/>
<rect x="271.5" y="150" width="3" height="20" rx="1.5" fill="#15181b"/><rect x="272.5" y="185" width="3.2" height="36" rx="1.6" fill="#15181b"/><rect x="273.2" y="232" width="3.2" height="36" rx="1.6" fill="#15181b"/>
<g clip-path="url(#qscr)">
<path d="M292 100 C292 76 302 57 320 60.4 L452 98 C470 103 482 116 482.5 138 L503.5 495 L330 495 C314 486 304 470 303 447 Z" fill="#4a3e35"/>
<path d="M280 100.0 L500 158.0 L520 500 L280 500 Z" fill="#ffffff"/>
<path d="M280 88.1 L500 146.8 L500 169.0 L280 113.1 Z" fill="#ece8e4"/>
<path d="M280 200 L500 252 L500 300 L280 236 Z" fill="url(#qgr)"/>
<path d="M293 236 C294 228 300 223.5 308 225 L500 270 L520 500 L300 500 Z" fill="#fefefe"/>
<path d="M299.5 130.5 L479.2 178.1 L481.7 230.8 L300.3 185.6 Z" fill="#4a3e35"/>
<path d="M313.7 150.5 L419 178" stroke="#dcdcdc" stroke-width="10" stroke-linecap="round"/>
<path d="M314.5 172.3 L370.5 187.3" stroke="#9a928c" stroke-width="10" stroke-linecap="round"/>
<path d="M318.5 249.2 L344.5 257.2" stroke="#a88532" stroke-width="17" stroke-linecap="round"/>
<path d="M366.5 261 L392.5 268.7" stroke="#e6e3e0" stroke-width="17" stroke-linecap="round"/>
<path d="M324.5 302.4 L399.0 319.2 L399.8 339.7 L325.2 323.3 Z" fill="#6aa674" /><path d="M325.2 326.2 L400.0 342.6 L400.8 363.1 L325.9 347.0 Z" fill="#6aa674" /><path d="M326.0 349.9 L400.9 365.9 L401.8 386.5 L326.6 370.8 Z" fill="#e9a99c" /><path d="M326.7 373.7 L401.9 389.3 L402.7 409.8 L327.4 394.5 Z" fill="#d96b62" /><path d="M327.5 397.4 L402.9 412.7 L403.7 433.2 L328.1 418.3 Z" fill="#d96b62" /><path d="M328.2 421.2 L403.8 436.0 L404.7 456.5 L328.9 442.0 Z" fill="#d96b62" /><path d="M402.7 320.0 L474.6 336.2 L475.4 356.4 L403.4 340.5 Z" fill="#6aa674" /><path d="M403.4 343.3 L475.6 359.2 L476.4 379.3 L404.1 363.8 Z" fill="#6aa674" /><path d="M404.2 366.6 L476.5 382.1 L477.4 402.2 L404.8 387.1 Z" fill="#9dcf9f" /><path d="M404.9 389.9 L477.5 405.0 L478.3 425.2 L405.6 410.4 Z" fill="#e9a99c" /><path d="M405.7 413.2 L478.5 427.9 L479.3 448.1 L406.3 433.7 Z" fill="#d96b62" /><path d="M406.4 436.5 L479.4 450.9 L480.3 471.0 L407.1 457.0 Z" fill="#d96b62" /><path d="M478.0 337.0 L520.0 346.5 L520.8 366.4 L478.7 357.1 Z" fill="#6aa674" /><path d="M478.7 359.9 L521.0 369.1 L521.8 389.1 L479.4 380.0 Z" fill="#6aa674" /><path d="M479.5 382.7 L521.9 391.8 L522.8 411.7 L480.1 402.8 Z" fill="#6aa674" /><path d="M480.2 405.6 L522.9 414.5 L523.7 434.4 L480.9 425.7 Z" fill="#9dcf9f" /><path d="M481.0 428.5 L523.9 437.1 L524.7 457.0 L481.6 448.5 Z" fill="#e9a99c" /><path d="M481.7 451.3 L524.8 459.8 L525.7 479.7 L482.4 471.4 Z" fill="#d96b62" />
<text transform="matrix(1 0.23 0 1 314.4 313.4)" class="pl">0</text><text transform="matrix(1 0.23 0 1 315.2 337.2)" class="pl">1</text><text transform="matrix(1 0.23 0 1 315.2 360.7)" class="pl">2</text><text transform="matrix(1 0.23 0 1 315.9 384.6)" class="pl">3</text><text transform="matrix(1 0.23 0 1 316.3 408.8)" class="pl">4</text><text transform="matrix(1 0.23 0 1 317.0 433.0)" class="pl">5</text><text transform="matrix(1 0.24 0 1 361.7 304.9)" class="pl">0</text><text transform="matrix(1 0.24 0 1 438 322.8)" class="pl">1</text>
</g>
<path d="M340 60 L343.5 66 C350 68 350.5 72 351 76 C352 82 356 84.5 361 86 L410 99.8 C418 102 423 100.5 424 94.5 C424.6 91 426 89 433 91.5 L436 82 Z" fill="#08090a"/>
<circle cx="359.7" cy="72.8" r="3.6" fill="#1a1d2b"/><circle cx="359.7" cy="72.8" r="1.4" fill="#3a4468"/>

</svg>
<div class="bt1" style="left:564px;top:176.4px">赢输预测</div>
<div class="bt2" style="left:564px;top:240.3px">点击在赛事上的预测按钮<br>以查看潜在的赢输。</div></div>
<div class="ban" id="b3" style="top:1171px"><svg class="abs" style="left:0;top:0" width="1113" height="491" viewBox="0 0 1113 491">
<defs>
<linearGradient id="c0base" x1="0" y1="0" x2="1" y2="0"><stop offset="0" stop-color="#202020"/><stop offset="0.22" stop-color="#191919"/><stop offset="0.45" stop-color="#1a170d"/><stop offset="1" stop-color="#22201a"/></linearGradient>
<radialGradient id="c0dark" cx="330" cy="-30" r="290" gradientUnits="userSpaceOnUse" gradientTransform="translate(330 -30) scale(1.2 0.8) translate(-330 30)"><stop offset="0" stop-color="#000" stop-opacity="0.8"/><stop offset="0.55" stop-color="#000" stop-opacity="0.35"/><stop offset="1" stop-color="#000" stop-opacity="0"/></radialGradient>
<radialGradient id="c0glow" cx="740" cy="330" r="390" gradientUnits="userSpaceOnUse" gradientTransform="translate(740 330) scale(1 1.0) translate(-740 -330)"><stop offset="0" stop-color="#4e3d13" stop-opacity="0.9"/><stop offset="0.55" stop-color="#3e300f" stop-opacity="0.7"/><stop offset="1" stop-color="#2a200a" stop-opacity="0"/></radialGradient>
<radialGradient id="c0glow2" cx="540" cy="500" r="210" gradientUnits="userSpaceOnUse" gradientTransform="translate(540 500) scale(1.5 0.42) translate(-540 -500)"><stop offset="0" stop-color="#a8801e" stop-opacity="0.7"/><stop offset="0.6" stop-color="#7a601a" stop-opacity="0.25"/><stop offset="1" stop-color="#5a4616" stop-opacity="0"/></radialGradient>
<linearGradient id="c0v1" x1="872" y1="228" x2="1000" y2="292" gradientUnits="userSpaceOnUse"><stop offset="0" stop-color="#8c782a" stop-opacity="0.62"/><stop offset="0.5" stop-color="#7a6826" stop-opacity="0.38"/><stop offset="1" stop-color="#6a5a22" stop-opacity="0.1"/></linearGradient>
<linearGradient id="c0v3" x1="520" y1="20" x2="640" y2="200" gradientUnits="userSpaceOnUse"><stop offset="0" stop-color="#6a5a20" stop-opacity="0.0"/><stop offset="0.55" stop-color="#6a5a20" stop-opacity="0.3"/><stop offset="1" stop-color="#6a5a20" stop-opacity="0.0"/></linearGradient>
<linearGradient id="c0fade" x1="905" y1="240" x2="1005" y2="250" gradientUnits="userSpaceOnUse"><stop offset="0" stop-color="#222" stop-opacity="0"/><stop offset="0.55" stop-color="#222" stop-opacity="0.8"/><stop offset="1" stop-color="#222" stop-opacity="1"/></linearGradient>
<linearGradient id="c0st" x1="440" y1="470" x2="930" y2="330" gradientUnits="userSpaceOnUse"><stop offset="0" stop-color="#d08a28" stop-opacity="0.0"/><stop offset="0.1" stop-color="#e0982c" stop-opacity="0.85"/><stop offset="0.5" stop-color="#c8a83a" stop-opacity="0.45"/><stop offset="1" stop-color="#c8a83a" stop-opacity="0"/></linearGradient>
<filter id="c0b6" x="-20%" y="-20%" width="140%" height="140%"><feGaussianBlur stdDeviation="6"/></filter>
<filter id="c0b2" x="-20%" y="-20%" width="140%" height="140%"><feGaussianBlur stdDeviation="1.4"/></filter>
<filter id="c0b10" x="-30%" y="-30%" width="160%" height="160%"><feGaussianBlur stdDeviation="10"/></filter>
<clipPath id="c0clip"><rect x="77" y="0" width="959" height="491"/></clipPath>
</defs>
<rect width="1113" height="491" fill="#222"/>
<g clip-path="url(#c0clip)">
<rect x="77" width="959" height="491" fill="url(#c0base)"/>
<rect x="77" width="959" height="491" fill="url(#c0glow)"/>
<rect x="77" width="959" height="491" fill="url(#c0glow2)"/>
<rect x="77" width="959" height="491" fill="url(#c0dark)"/>
<path d="M380 175 C540 130 660 70 730 0 L900 0 C830 110 700 200 380 270 Z" fill="url(#c0v3)" filter="url(#c0b10)"/>
<path d="M737 491 C765 430 785 392 804 354 C830 305 855 262 879 223 C900 185 918 148 935 112 C950 82 962 58 980 0 L1100 0 L1100 491 Z" fill="url(#c0v1)"/>
<path d="M420 476 C560 462 690 446 770 420 C830 398 870 360 900 320" fill="none" stroke="url(#c0st)" stroke-width="8" filter="url(#c0b6)"/>
<path d="M420 476 C560 462 690 446 770 420 C830 398 870 360 900 320" fill="none" stroke="url(#c0st)" stroke-width="1.6" filter="url(#c0b2)"/>
<path d="M737 491 C765 430 785 392 804 354 C830 305 855 262 879 223 C900 185 918 148 935 112 C950 82 962 58 980 0" fill="none" stroke="#c4a846" stroke-opacity="0.2" stroke-width="2.5" filter="url(#c0b2)"/>

<g fill="none" stroke="#b09a48" stroke-width="0.7" opacity="0.16"><path d="M640 190 C760 110 880 90 975 18"/><path d="M646 188 C763 109 881 92 974 24"/><path d="M652 187 C766 109 881 93 974 30"/><path d="M658 185 C770 108 882 95 973 36"/><path d="M663 184 C773 107 883 96 972 41"/><path d="M669 182 C776 107 883 98 972 47"/><path d="M675 180 C780 106 884 100 971 53"/><path d="M681 179 C783 105 885 101 970 59"/><path d="M687 177 C786 105 885 103 970 65"/><path d="M693 175 C789 104 886 105 969 71"/><path d="M698 174 C792 104 886 106 968 76"/><path d="M704 172 C796 103 887 108 968 82"/><path d="M710 170 C799 102 888 110 967 88"/><path d="M716 169 C802 102 888 111 967 94"/><path d="M722 167 C806 101 889 113 966 100"/><path d="M728 166 C809 100 890 114 965 106"/><path d="M734 164 C812 100 890 116 965 112"/><path d="M739 162 C815 99 891 118 964 117"/></g>
<circle cx="678.1" cy="412.4" r="1.2" fill="#f0c75a" opacity="0.59"/><circle cx="863.3" cy="351.3" r="1.5" fill="#f0c75a" opacity="0.61"/><circle cx="752.4" cy="350.7" r="1.2" fill="#f0c75a" opacity="0.50"/><circle cx="511.7" cy="453.6" r="1.9" fill="#f0c75a" opacity="0.71"/><circle cx="743.9" cy="385.4" r="1.2" fill="#f0c75a" opacity="0.73"/><circle cx="753.2" cy="346.0" r="0.7" fill="#f0c75a" opacity="0.84"/><circle cx="499.1" cy="325.9" r="0.9" fill="#f0c75a" opacity="0.69"/><circle cx="827.9" cy="373.8" r="1.5" fill="#f0c75a" opacity="0.85"/><circle cx="708.8" cy="425.6" r="1.2" fill="#f0c75a" opacity="0.30"/><circle cx="509.1" cy="428.0" r="1.2" fill="#f0c75a" opacity="0.95"/><circle cx="928.0" cy="458.6" r="1.9" fill="#f0c75a" opacity="0.47"/><circle cx="818.7" cy="404.6" r="0.7" fill="#f0c75a" opacity="0.35"/><circle cx="822.5" cy="386.1" r="1.0" fill="#f0c75a" opacity="0.55"/><circle cx="910.7" cy="459.8" r="0.7" fill="#f0c75a" opacity="0.44"/><circle cx="896.4" cy="328.6" r="1.2" fill="#f0c75a" opacity="0.94"/><circle cx="652.8" cy="332.1" r="1.9" fill="#f0c75a" opacity="0.43"/><circle cx="780.5" cy="375.6" r="1.0" fill="#f0c75a" opacity="0.52"/><circle cx="913.5" cy="445.1" r="0.7" fill="#f0c75a" opacity="0.39"/><circle cx="795.2" cy="321.8" r="1.2" fill="#f0c75a" opacity="0.82"/><circle cx="551.7" cy="412.3" r="1.2" fill="#f0c75a" opacity="0.63"/><circle cx="923.2" cy="447.0" r="1.2" fill="#f0c75a" opacity="0.72"/><circle cx="523.6" cy="389.4" r="0.9" fill="#f0c75a" opacity="0.30"/><circle cx="867.6" cy="480.9" r="1.5" fill="#f0c75a" opacity="0.50"/><circle cx="877.0" cy="354.8" r="1.2" fill="#f0c75a" opacity="0.95"/><circle cx="746.9" cy="415.2" r="0.7" fill="#f0c75a" opacity="0.94"/><circle cx="568.1" cy="362.6" r="1.5" fill="#f0c75a" opacity="0.51"/><circle cx="606.3" cy="332.1" r="0.7" fill="#f0c75a" opacity="0.44"/><circle cx="762.8" cy="322.6" r="1.0" fill="#f0c75a" opacity="0.54"/><circle cx="678.5" cy="478.3" r="1.2" fill="#f0c75a" opacity="0.84"/><circle cx="532.4" cy="383.7" r="1.9" fill="#f0c75a" opacity="0.40"/><circle cx="887.9" cy="454.9" r="0.9" fill="#f0c75a" opacity="0.77"/><circle cx="542.9" cy="423.8" r="1.5" fill="#f0c75a" opacity="0.43"/><circle cx="907.1" cy="465.6" r="1.5" fill="#f0c75a" opacity="0.35"/><circle cx="491.8" cy="338.0" r="1.5" fill="#f0c75a" opacity="0.93"/><circle cx="579.7" cy="436.3" r="1.0" fill="#f0c75a" opacity="0.57"/><circle cx="886.2" cy="401.0" r="1.5" fill="#f0c75a" opacity="0.41"/><circle cx="801.4" cy="331.3" r="0.9" fill="#f0c75a" opacity="0.61"/><circle cx="770.6" cy="421.6" r="0.7" fill="#f0c75a" opacity="0.48"/><circle cx="892.0" cy="353.7" r="0.7" fill="#f0c75a" opacity="0.34"/><circle cx="659.3" cy="361.1" r="0.7" fill="#f0c75a" opacity="0.41"/><circle cx="639.6" cy="414.4" r="0.9" fill="#f0c75a" opacity="0.36"/><circle cx="533.7" cy="394.3" r="1.0" fill="#f0c75a" opacity="0.73"/><circle cx="788.0" cy="416.4" r="0.9" fill="#f0c75a" opacity="0.68"/><circle cx="894.9" cy="398.3" r="1.0" fill="#f0c75a" opacity="0.76"/><circle cx="912.9" cy="323.5" r="1.9" fill="#f0c75a" opacity="0.35"/><circle cx="500.9" cy="371.3" r="0.9" fill="#f0c75a" opacity="0.95"/><circle cx="504.6" cy="410.1" r="1.9" fill="#f0c75a" opacity="0.33"/><circle cx="900.7" cy="441.6" r="0.9" fill="#f0c75a" opacity="0.82"/><circle cx="890.9" cy="378.1" r="1.9" fill="#f0c75a" opacity="0.61"/><circle cx="505.7" cy="461.5" r="0.7" fill="#f0c75a" opacity="0.86"/><circle cx="733.5" cy="423.1" r="1.2" fill="#f0c75a" opacity="0.55"/><circle cx="475.7" cy="331.9" r="0.7" fill="#f0c75a" opacity="0.72"/><circle cx="926.9" cy="465.2" r="1.9" fill="#f0c75a" opacity="0.51"/><circle cx="899.8" cy="434.5" r="1.2" fill="#f0c75a" opacity="0.59"/><circle cx="855.7" cy="333.8" r="1.5" fill="#f0c75a" opacity="0.32"/><circle cx="746.6" cy="399.4" r="0.9" fill="#f0c75a" opacity="0.92"/><circle cx="521.9" cy="448.7" r="1.9" fill="#f0c75a" opacity="0.90"/><circle cx="587.7" cy="321.9" r="1.0" fill="#f0c75a" opacity="0.39"/><circle cx="751.4" cy="405.5" r="1.0" fill="#f0c75a" opacity="0.73"/><circle cx="673.3" cy="467.1" r="1.0" fill="#f0c75a" opacity="0.56"/><circle cx="837.9" cy="389.0" r="1.2" fill="#f0c75a" opacity="0.95"/><circle cx="812.3" cy="382.5" r="1.5" fill="#f0c75a" opacity="0.64"/><circle cx="854.0" cy="380.3" r="1.0" fill="#f0c75a" opacity="0.87"/><circle cx="857.9" cy="369.0" r="1.2" fill="#f0c75a" opacity="0.60"/><circle cx="779.7" cy="376.9" r="2.0" fill="#f0c75a" opacity="0.72"/><circle cx="799.5" cy="369.8" r="2.0" fill="#f0c75a" opacity="0.69"/><circle cx="848.0" cy="363.5" r="1.0" fill="#f0c75a" opacity="0.86"/><circle cx="833.3" cy="383.0" r="1.0" fill="#f0c75a" opacity="0.84"/><circle cx="824.0" cy="376.4" r="1.5" fill="#f0c75a" opacity="0.66"/><circle cx="843.1" cy="374.9" r="1.0" fill="#f0c75a" opacity="0.75"/><circle cx="812.0" cy="359.2" r="1.5" fill="#f0c75a" opacity="0.98"/><circle cx="831.1" cy="364.7" r="2.0" fill="#f0c75a" opacity="0.67"/><circle cx="828.3" cy="352.4" r="1.0" fill="#f0c75a" opacity="0.63"/><circle cx="834.6" cy="382.9" r="1.2" fill="#f0c75a" opacity="0.73"/><circle cx="852.7" cy="346.8" r="1.0" fill="#f0c75a" opacity="0.73"/><circle cx="858.1" cy="364.6" r="2.0" fill="#f0c75a" opacity="0.75"/><circle cx="797.8" cy="353.3" r="2.0" fill="#f0c75a" opacity="0.80"/><circle cx="820.4" cy="360.4" r="1.5" fill="#f0c75a" opacity="0.76"/><circle cx="827.8" cy="365.4" r="1.0" fill="#f0c75a" opacity="0.65"/><circle cx="897.0" cy="352.2" r="1.5" fill="#f0c75a" opacity="0.79"/><circle cx="403.1" cy="379.7" r="1.2" fill="#f0c75a" opacity="0.64"/><circle cx="261.5" cy="342.8" r="0.9" fill="#f0c75a" opacity="0.40"/><circle cx="284.9" cy="372.7" r="0.7" fill="#f0c75a" opacity="0.35"/><circle cx="427.6" cy="396.5" r="0.7" fill="#f0c75a" opacity="0.33"/><circle cx="257.2" cy="452.1" r="0.7" fill="#f0c75a" opacity="0.46"/><circle cx="469.9" cy="469.6" r="1.2" fill="#f0c75a" opacity="0.63"/><circle cx="370.6" cy="476.6" r="0.9" fill="#f0c75a" opacity="0.51"/><circle cx="370.5" cy="447.5" r="0.9" fill="#f0c75a" opacity="0.49"/><circle cx="242.9" cy="443.0" r="1.2" fill="#f0c75a" opacity="0.32"/><circle cx="314.5" cy="470.6" r="0.9" fill="#f0c75a" opacity="0.39"/><circle cx="272.0" cy="461.0" r="1.2" fill="#f0c75a" opacity="0.34"/><circle cx="422.2" cy="480.1" r="1.2" fill="#f0c75a" opacity="0.37"/>
<path d="M820 491 L930 0 L1040 0 L1040 491 Z" fill="url(#c0fade)"/>
</g>
</svg><svg class="abs" style="left:0;top:0" width="1113" height="491" viewBox="0 0 1113 491">
<defs>
<clipPath id="cscr"><path d="M227 491 V80 a24 24 0 0 1 24 -24 H464 a24 24 0 0 1 24 24 V491 Z"/></clipPath>
<linearGradient id="ccard" x1="111" y1="0" x2="525" y2="0" gradientUnits="userSpaceOnUse">
<stop offset="0" stop-color="#8e8e8e"/><stop offset="0.04" stop-color="#6c6c6c"/><stop offset="0.2" stop-color="#8f8f8f"/><stop offset="0.36" stop-color="#b4b4b4"/><stop offset="0.46" stop-color="#e4e4e4"/><stop offset="0.62" stop-color="#f4f4f4"/><stop offset="0.72" stop-color="#f0efee"/><stop offset="0.88" stop-color="#d2cfcc"/><stop offset="1" stop-color="#b4b1af"/></linearGradient>
<linearGradient id="cbar" x1="129" y1="0" x2="270" y2="0" gradientUnits="userSpaceOnUse"><stop offset="0" stop-color="#a0a0a0"/><stop offset="0.5" stop-color="#808080"/><stop offset="1" stop-color="#7a7a7a"/></linearGradient>
<linearGradient id="cband" x1="0" y1="109" x2="0" y2="150" gradientUnits="userSpaceOnUse"><stop offset="0" stop-color="#d6d1cd"/><stop offset="1" stop-color="#e6e3e0"/></linearGradient>
<linearGradient id="clowg" x1="227" y1="0" x2="488" y2="0" gradientUnits="userSpaceOnUse"><stop offset="0" stop-color="#ececec"/><stop offset="0.2" stop-color="#f7f7f7"/><stop offset="1" stop-color="#fafafa"/></linearGradient>
<filter id="csh" x="-10%" y="-10%" width="120%" height="130%"><feGaussianBlur stdDeviation="7"/></filter>
</defs>
<!-- phone body -->
<path d="M214 491 V76 a35 35 0 0 1 35 -35 H466 a35 35 0 0 1 35 35 V491 Z" fill="#050505" stroke="#b9b9b9" stroke-width="2"/>
<g clip-path="url(#cscr)">
<rect x="227" y="56" width="261" height="54" fill="#4a3e35"/>
<rect x="227" y="109" width="261" height="45" fill="url(#cband)"/>
<rect x="227" y="154" width="261" height="340" fill="url(#clowg)"/>
<rect x="360.4" y="354.4" width="44.6" height="30.9" rx="4" fill="#f4f4f4" stroke="#e7e7e7" stroke-width="1.2"/><rect x="410.6" y="354.4" width="46.4" height="30.9" rx="4" fill="#f4f4f4" stroke="#e7e7e7" stroke-width="1.2"/><rect x="461.7" y="354.4" width="38.3" height="30.9" rx="4" fill="#f4f4f4" stroke="#e7e7e7" stroke-width="1.2"/><rect x="360.4" y="389.8" width="44.6" height="30.9" rx="4" fill="#f4f4f4" stroke="#e7e7e7" stroke-width="1.2"/><rect x="410.6" y="389.8" width="46.4" height="30.9" rx="4" fill="#f4f4f4" stroke="#e7e7e7" stroke-width="1.2"/><rect x="461.7" y="389.8" width="38.3" height="30.9" rx="4" fill="#f4f4f4" stroke="#e7e7e7" stroke-width="1.2"/><rect x="360.4" y="470.0" width="44.6" height="30.0" rx="4" fill="#f4f4f4" stroke="#e7e7e7" stroke-width="1.2"/><rect x="410.6" y="470.0" width="46.4" height="30.0" rx="4" fill="#f4f4f4" stroke="#e7e7e7" stroke-width="1.2"/><rect x="461.7" y="470.0" width="38.3" height="30.0" rx="4" fill="#f4f4f4" stroke="#e7e7e7" stroke-width="1.2"/>
<rect x="233.8" y="366" width="103" height="7.5" rx="3.7" fill="#dedede"/>
<rect x="233.8" y="401.3" width="68.5" height="7.5" rx="3.7" fill="#dedede"/>
<rect x="230.8" y="437" width="252" height="3" rx="1.5" fill="#e4e4e4"/>
<rect x="360.4" y="457" width="45.4" height="7" rx="3.5" fill="#8c8c8c"/>
<rect x="410.6" y="457" width="46.4" height="7" rx="3.5" fill="#8c8c8c"/>
<rect x="461.7" y="457" width="40" height="7" rx="3.5" fill="#8c8c8c"/>
<rect x="233.8" y="482" width="103" height="7.5" rx="3.7" fill="#dedede"/>
</g>
<!-- notch -->
<path d="M296 55 H420 C413 55 412.5 58 412.5 62 V64 a12 12 0 0 1 -12 12 H315.4 a12 12 0 0 1 -12 -12 V62 C303.4 58 303 55 296 55 Z" fill="#050505"/>
<rect x="333" y="45.5" width="48" height="4" rx="2" fill="#3a3a3a"/>
<circle cx="317" cy="63" r="5" fill="#1b1b22"/>
<!-- card shadow -->
<rect x="113" y="150" width="410" height="206" rx="12" fill="#000" opacity="0.45" filter="url(#csh)"/>
<rect x="111" y="140.4" width="414" height="209.6" rx="12" fill="url(#ccard)" stroke="#d9d9d9" stroke-opacity="0.55" stroke-width="1"/>
<rect x="301.6" y="211.0" width="37.2" height="41.4" rx="5" fill="#fff" fill-opacity="0.8" stroke="#e6e6e6" stroke-width="1"/><rect x="345.9" y="211.0" width="62.9" height="41.4" rx="5" fill="#fff" fill-opacity="0.8" stroke="#e6e6e6" stroke-width="1"/><rect x="415.5" y="211.0" width="60.3" height="41.4" rx="5" fill="#fff" fill-opacity="0.8" stroke="#e6e6e6" stroke-width="1"/><rect x="301.6" y="259.5" width="37.2" height="41.3" rx="5" fill="#fff" fill-opacity="0.8" stroke="#e6e6e6" stroke-width="1"/><rect x="345.9" y="259.5" width="62.9" height="41.3" rx="5" fill="#fff" fill-opacity="0.8" stroke="#e6e6e6" stroke-width="1"/><rect x="415.5" y="259.5" width="60.3" height="41.3" rx="5" fill="#fff" fill-opacity="0.8" stroke="#e6e6e6" stroke-width="1"/>
<rect x="301.6" y="191.7" width="37.9" height="10.5" rx="5.2" fill="#787878"/>
<rect x="345" y="191.7" width="64.5" height="10.5" rx="5.2" fill="#dfce78"/>
<rect x="415" y="191.7" width="61.5" height="10.5" rx="5.2" fill="#787878"/>
<rect x="129.6" y="226" width="140.4" height="11" rx="5.5" fill="url(#cbar)"/>
<rect x="129.6" y="274.4" width="94.4" height="10.8" rx="5.4" fill="url(#cbar)"/>
<g fill="none" stroke="#000" stroke-width="4" stroke-linecap="butt" stroke-linejoin="miter">
<path d="M272 196.5 H292"/><path d="M279 189.5 L271.5 196.5 L279 203.5" />
<path d="M486 196.5 H506"/><path d="M499 189.5 L506.5 196.5 L499 203.5" />
</g>
</svg>
<div class="bt1" style="left:564px;top:150px">左右滑动<br>显示更多盘口</div>
<div class="bt2" style="left:564px;top:266px">左右滑动<br>可浏览更多盘口。</div></div>
<div id="slip">
  <svg class="abs" style="left:30px;top:34px" width="36" height="28" viewBox="2334 1698 36 28" fill="none" stroke="#bdb5af" stroke-width="3.6" stroke-linecap="round" stroke-linejoin="round"><path d="M2342.5 1716.5 L2352 1707.2 L2361.5 1716.5"/></svg>
  <div class="abs" style="left:112px;top:15px;font-size:32px;line-height:40px;color:#fff;white-space:nowrap">注单</div>
  <div class="abs" style="left:192px;top:18px;width:2px;height:32px;background:#85796f"></div>
  <div class="abs" style="left:211px;top:14px;font-size:28px;line-height:40px;color:#fff">1</div>
  <div class="abs" style="left:112px;top:55px;font-size:24px;line-height:32px;color:#cdebe0;white-space:nowrap">90,826.00 RMB</div>
  <svg class="abs" style="left:1086px;top:28px" width="36" height="40" viewBox="3390 1692 36 40" fill="none" stroke="#c9c2bc" stroke-width="2" stroke-linejoin="round" stroke-linecap="round"><path d="M3402.5 1700 V1697.5 a1.3 1.3 0 0 1 1.3 -1.3 H3412.3 a1.3 1.3 0 0 1 1.3 1.3 V1700"/><rect x="3395" y="1700.3" width="26" height="4" rx="1.6"/><path d="M3396.8 1704.5 L3399 1725 a2 2 0 0 0 2 1.8 H3415 a2 2 0 0 0 2 -1.8 L3419.2 1704.5"/><path d="M3402.4 1708.5 L3403.4 1722.5 M3408 1708.5 V1722.5 M3413.6 1708.5 L3412.6 1722.5"/></svg>
</div>
</body>
</html>
